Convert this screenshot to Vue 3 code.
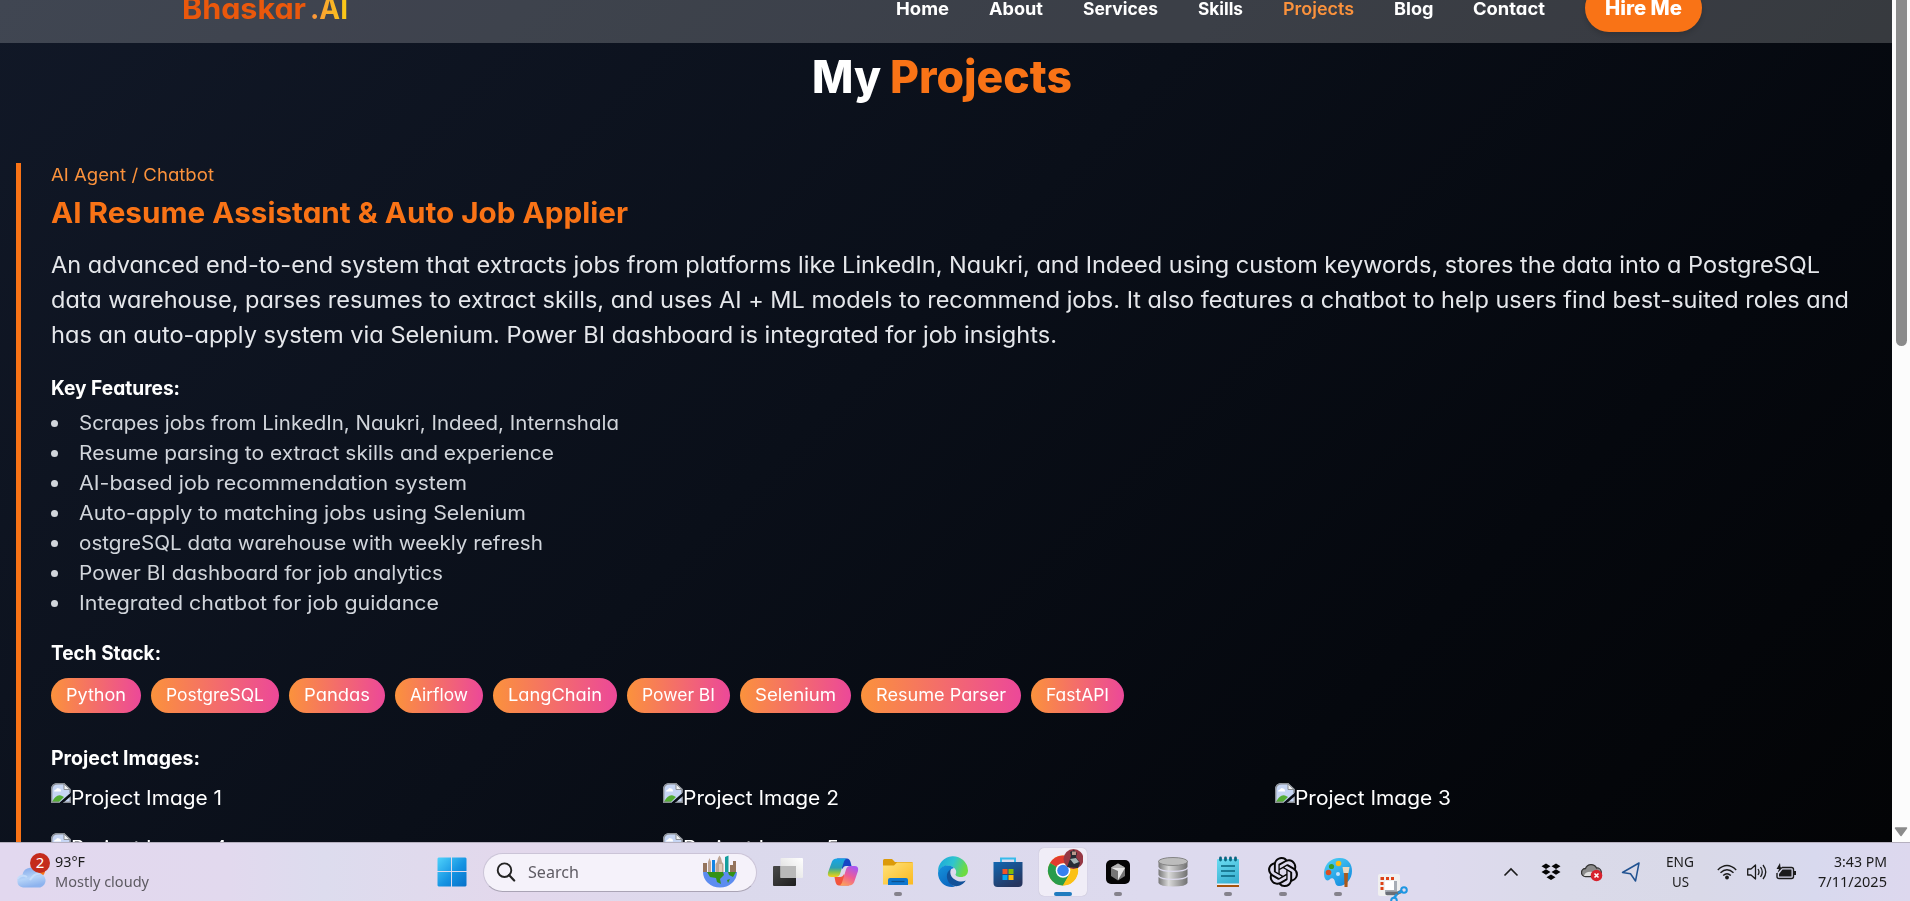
<script setup>
// Stretches a text run horizontally so that it takes the given width.
const vFit = {
  mounted(el, { value }) {
    const natural = el.getBoundingClientRect().width
    el.style.transform = `scaleX(${value / natural})`
    el.style.marginRight = `${value - natural}px`
  }
}

const links = [
  { label: 'Home', w: 53 },
  { label: 'About', w: 54 },
  { label: 'Services', w: 75 },
  { label: 'Skills', w: 45 },
  { label: 'Projects', w: 71, active: true },
  { label: 'Blog', w: 39.5 },
  { label: 'Contact', w: 72 }
]

const summary = [
  { text: 'An advanced end-to-end system that extracts jobs from platforms like LinkedIn, Naukri, and Indeed using custom keywords, stores the data into a PostgreSQL', w: 1769 },
  { text: 'data warehouse, parses resumes to extract skills, and uses AI + ML models to recommend jobs. It also features a chatbot to help users find best-suited roles and', w: 1798 },
  { text: 'has an auto-apply system via Selenium. Power BI dashboard is integrated for job insights.', w: 1006 }
]

const features = [
  { text: 'Scrapes jobs from LinkedIn, Naukri, Indeed, Internshala', w: 540 },
  { text: 'Resume parsing to extract skills and experience', w: 475 },
  { text: 'AI-based job recommendation system', w: 388 },
  { text: 'Auto-apply to matching jobs using Selenium', w: 447 },
  { text: 'ostgreSQL data warehouse with weekly refresh', w: 464 },
  { text: 'Power BI dashboard for job analytics', w: 364 },
  { text: 'Integrated chatbot for job guidance', w: 360 }
]

const stack = [
  { text: 'Python', w: 60 },
  { text: 'PostgreSQL', w: 98 },
  { text: 'Pandas', w: 66 },
  { text: 'Airflow', w: 58 },
  { text: 'LangChain', w: 94 },
  { text: 'Power BI', w: 73 },
  { text: 'Selenium', w: 81 },
  { text: 'Resume Parser', w: 130 },
  { text: 'FastAPI', w: 63 }
]

const images = [
  { text: 'Project Image 1', w: 151 },
  { text: 'Project Image 2', w: 156 },
  { text: 'Project Image 3', w: 156 },
  { text: 'Project Image 4', w: 156 },
  { text: 'Project Image 5', w: 156 }
]
</script>

<template>
  <div class="screen">
    <div class="window">
      <div class="page">
        <header class="header">
          <div class="bar">
            <div class="logo"><span v-fit="124">Bhaskar</span><span v-fit="38" class="ai">.AI</span></div>
            <nav class="nav">
              <a v-for="l in links" :key="l.label" v-fit="l.w" :class="{ active: l.active }">{{ l.label }}</a>
            </nav>
            <div class="hire"><span v-fit="77">Hire Me</span></div>
          </div>
        </header>

        <h1 class="title"><span v-fit="69">My</span><span v-fit="182" class="accent">Projects</span></h1>

        <article class="project">
          <div class="category"><span v-fit="163">AI Agent / Chatbot</span></div>
          <h2><span v-fit="577">AI Resume Assistant &amp; Auto Job Applier</span></h2>
          <p class="summary">
            <span v-for="s in summary" :key="s.w" v-fit="s.w">{{ s.text }}</span>
          </p>
          <h3 class="key"><span v-fit="129">Key Features:</span></h3>
          <ul>
            <li v-for="f in features" :key="f.text"><i></i><span v-fit="f.w">{{ f.text }}</span></li>
          </ul>
          <h3 class="tech"><span v-fit="110">Tech Stack:</span></h3>
          <div class="pills">
            <div v-for="s in stack" :key="s.text" class="pill"><span v-fit="s.w">{{ s.text }}</span></div>
          </div>
          <h3 class="shots"><span v-fit="149">Project Images:</span></h3>
          <div class="gallery">
            <div v-for="i in images" :key="i.text" class="shot">
              <svg width="20" height="20" viewBox="0 0 20 20">
                <path d="M7 0H13L19.500 6V20H0V7Q0 0 7 0Z" fill="#c7d6f4" />
                <path d="M0.700 20V7Q0.700 0.800 7 0.800H13L19 6.500V10" fill="none" stroke="#8b8f94" stroke-width="1.400" />
                <path d="M13 1V6.500H19Z" fill="#f3f4f6" stroke="#8b8f94" />
                <path d="M3 8.500Q3 6.500 5 6.500Q6 4 8 5.500Q10 5.500 10 8.500Z" fill="#fff" />
                <path d="M1 19Q5 11 10 12.500L13 14L8 19Z" fill="#54ad35" />
                <path d="M0 19.300H8M13 19.300H19.300V14" fill="none" stroke="#8b8f94" stroke-width="1.400" />
                <path d="M8 20L20 9.500V13L12 20Z" fill="#0a0e16" />
              </svg>
              <span v-fit="i.w">{{ i.text }}</span>
            </div>
          </div>
        </article>
      </div>

      <div class="scrollbar">
        <div class="thumb"></div>
        <svg width="14" height="10" viewBox="0 0 14 10"><path d="M1.500 1H12.500L7 8.500Z" fill="#8b8b8b" stroke="#8b8b8b" stroke-width="1.500" stroke-linejoin="round" /></svg>
      </div>
    </div>

    <footer class="taskbar">
      <div class="weather">
        <svg width="34" height="38" viewBox="0 0 34 38">
          <defs>
            <linearGradient id="cloud" x1="0" y1="0" x2="0.300" y2="1"><stop offset="0" stop-color="#7fa5e8" /><stop offset="0.600" stop-color="#b5d3f8" /><stop offset="1" stop-color="#8db3ee" /></linearGradient>
          </defs>
          <circle cx="23" cy="18" r="6" fill="#f97316" />
          <path d="M7 34.500a6.500 6.500 0 0 1-0.500-12.800a8.500 8.500 0 0 1 16.300-1.500a7.300 7.300 0 0 1 1.500 14.300Z" fill="url(#cloud)" />
          <path d="M1.500 26q4-5.500 9.500-2M14 27q4-7 10.500-6.500" fill="none" stroke="#c9e0fb" stroke-width="2" opacity="0.800" />
          <circle cx="24" cy="10" r="10" fill="#c42b1c" />
          <text x="24" y="15.300" text-anchor="middle" font-size="15" fill="#fff">2</text>
        </svg>
        <div class="lines">
          <span v-fit="30">93°F</span>
          <span v-fit="94" class="dim">Mostly cloudy</span>
        </div>
      </div>

      <div class="app">
        <svg width="30" height="30" viewBox="0 0 30 30">
          <defs><linearGradient id="win" x1="0" y1="0" x2="1" y2="1"><stop offset="0" stop-color="#4fd2fb" /><stop offset="0.550" stop-color="#1593e2" /><stop offset="1" stop-color="#0670c9" /></linearGradient></defs>
          <path d="M1.500 0.500H14V14H0.500V1.500ZM15 0.500H28.500L29.500 1.500V14H15ZM0.500 15H14V29.500H1.500L0.500 28.500ZM15 15H29.500V28.500L28.500 29.500H15Z" fill="url(#win)" />
        </svg>
      </div>

      <div class="search">
        <svg width="20" height="20" viewBox="0 0 20 20"><circle cx="8.500" cy="8.200" r="6.800" fill="none" stroke="#242424" stroke-width="1.900" /><path d="M13 13L18.200 18.500" stroke="#242424" stroke-width="2.200" stroke-linecap="round" /></svg>
        <span v-fit="51">Search</span>
        <svg class="globe" width="36" height="34" viewBox="0 0 36 34">
          <path d="M1 17H35A17 15.500 0 0 1 1 17Z" fill="#5c8cf0" />
          <path d="M5 17H21L22 20L18 24L19 29L15 27L14 23L8 22ZM26 17H34L31 22L27 20ZM25 25l3-1-2 4Z" fill="#349216" />
          <path d="M1 17V8H5V17ZM28 17V10H31V6H34V17Z" fill="#94745d" />
          <path d="M6 17V7L7.500 3L9 7V17ZM13.500 17V9L15 7L16 3L17.500 0.500L19 3L20 7L21.500 9V17Z" fill="#bda594" />
          <path d="M10 17V5H13V17Z" fill="#1485e4" />
          <path d="M17 17V9H20V17Z" fill="#dfc9b8" />
          <path d="M23 17V2L26.500 0.500V17Z" fill="#149d9d" />
        </svg>
      </div>

      <div class="apps">
        <div class="app">
          <svg width="32" height="30" viewBox="0 0 32 30">
            <defs>
              <linearGradient id="tv1" x1="1" y1="0" x2="0" y2="1"><stop offset="0" stop-color="#fff" /><stop offset="1" stop-color="#d9d9d9" /></linearGradient>
              <linearGradient id="tv2" x1="0" y1="0" x2="1" y2="1"><stop offset="0" stop-color="#494949" /><stop offset="1" stop-color="#1e1e1e" /></linearGradient>
            </defs>
            <rect x="1" y="9" width="23" height="20" rx="1" fill="url(#tv2)" />
            <rect x="8.500" y="1" width="22.500" height="20" rx="1" fill="url(#tv1)" />
            <rect x="8.500" y="9" width="15.500" height="12" fill="#b9b9b9" />
          </svg>
        </div>
        <div class="app">
          <svg width="32" height="30" viewBox="0 0 32 30">
            <defs>
              <linearGradient id="cp1" x1="0" y1="0" x2="0" y2="1"><stop offset="0" stop-color="#16a5e8" /><stop offset="0.500" stop-color="#2b9fb4" /><stop offset="0.750" stop-color="#8bc34a" /><stop offset="1" stop-color="#f6d117" /></linearGradient>
              <linearGradient id="cp2" x1="0.700" y1="0" x2="0.200" y2="1"><stop offset="0" stop-color="#a957f0" /><stop offset="0.500" stop-color="#ef5d94" /><stop offset="1" stop-color="#fba457" /></linearGradient>
            </defs>
            <path d="M10 1.500H20Q22.500 1.500 23.500 5L24.500 9H19Q16.500 9 15.500 12Z" fill="#1746c4" />
            <path d="M22 28.500H12Q9.500 28.500 8.500 25L7.500 20H13Q16 20 17 17Z" fill="#f2543c" />
            <path d="M10 1.500H20Q17.500 2 16.500 6L13 17Q12 20 9 20H4.500Q0 20 1 15.500L5 4.500Q6.300 1.500 10 1.500Z" fill="url(#cp1)" />
            <path d="M22 28.500H12Q14.500 28 15.500 24L19 12.500Q20 9 23 9H27.500Q32 9 31 14L27 25.500Q25.500 28.500 22 28.500Z" fill="url(#cp2)" />
          </svg>
        </div>
        <div class="app">
          <svg width="32" height="30" viewBox="0 0 32 30">
            <defs><linearGradient id="fold" x1="0" y1="0" x2="1" y2="1"><stop offset="0" stop-color="#ffe27a" /><stop offset="1" stop-color="#fbb91f" /></linearGradient></defs>
            <path d="M1 9V3.500Q1 2 2.500 2H10L13 5H29.500Q31 5 31 6.500V9Z" fill="#dc9a08" />
            <path d="M1 8.500H12L15 5.500H31V27.500H1Z" fill="url(#fold)" />
            <path d="M6 28V23Q6 21 8 21H24Q26 21 26 23V28Z" fill="#0f76ce" />
            <path d="M9.500 24.500H22.500" stroke="#0b5290" stroke-width="1.300" />
          </svg>
          <b></b>
        </div>
        <div class="app">
          <svg width="32" height="32" viewBox="0 0 32 32">
            <defs>
              <linearGradient id="ed1" x1="0" y1="0" x2="1" y2="0.300"><stop offset="0" stop-color="#19a4dc" /><stop offset="0.550" stop-color="#2fc4cf" /><stop offset="1" stop-color="#6ddb42" /></linearGradient>
              <linearGradient id="ed2" x1="0" y1="0" x2="0.600" y2="1"><stop offset="0" stop-color="#1593dc" /><stop offset="1" stop-color="#0b66c0" /></linearGradient>
            </defs>
            <path d="M1 16A15 15 0 0 1 31 14.500C31 19 27.500 21 24 21C20 21 18.500 19.500 18.500 18.500C19.500 17 19.500 14.500 18 12.800C14 8 4 9 1 16Z" fill="url(#ed1)" />
            <path d="M1 17C2 9.500 12 7.500 17 12C12 13 9.500 19 11.500 24C13 28 17 30.700 19 30.600C9 33 1 26 1 17Z" fill="url(#ed2)" />
            <path d="M14 13C8 16 9 25 14 28.500C19 32 26 29.500 28.700 24.500C24 27 17 24.500 14.500 20.500C13 18 13 15 14 13Z" fill="#125199" />
          </svg>
        </div>
        <div class="app">
          <svg width="32" height="32" viewBox="0 0 32 32">
            <defs><linearGradient id="store" x1="0" y1="0" x2="0.600" y2="1"><stop offset="0" stop-color="#1267b2" /><stop offset="1" stop-color="#26365f" /></linearGradient></defs>
            <path d="M9 7V2.500H23V7" fill="none" stroke="#37bbeb" stroke-width="2" />
            <path d="M1.500 6H30.500V27Q30.500 31 26.500 31H5.500Q1.500 31 1.500 27Z" fill="url(#store)" />
            <path d="M10.500 13H15.500V18H10.500Z" fill="#f35325" /><path d="M16.500 13H21.500V18H16.500Z" fill="#81bc06" />
            <path d="M10.500 19H15.500V24H10.500Z" fill="#05a6f0" /><path d="M16.500 19H21.500V24H16.500Z" fill="#ffba08" />
          </svg>
        </div>
        <div class="app current">
          <svg width="38" height="42" viewBox="0 0 38 42">
            <circle cx="18" cy="22.500" r="15" fill="#fbc116" />
            <path d="M18 22.500L5 15A15 15 0 0 1 31 15Z" fill="#e33b2e" />
            <path d="M18 22.500L5 15A15 15 0 0 0 18 37.500L24.500 26.200Z" fill="#289c4b" />
            <path d="M18 15H31A15 15 0 0 1 18 37.500L24.500 26Z" fill="#fbc116" />
            <circle cx="18" cy="22.500" r="7.300" fill="#fff" /><circle cx="18" cy="22.500" r="5.800" fill="#3580f0" />
            <circle cx="28.500" cy="11" r="10" fill="#963844" />
            <path d="M24 14L26 8L25 4L29 2L32 5L31 9L35 15L33 20L22 19Z" fill="#262c34" />
            <path d="M25 11L31 10L34 14L29 16Z" fill="#a6b5b5" /><path d="M27 3.500H31V7H27Z" fill="#b8988c" />
          </svg>
          <b></b>
        </div>
        <div class="app">
          <svg width="26" height="26" viewBox="0 0 26 26">
            <rect x="1" y="1" width="24" height="24" rx="5" fill="#050505" />
            <path d="M13 4.500L20 8.500V17L13 21.500L6 17V8.500Z" fill="#757575" /><path d="M6 8.500L13 4.500L20 8.500L13 11Z" fill="#b5b5b5" /><path d="M6.500 9H20L13 21V12Z" fill="#e5e5e5" />
          </svg>
          <b></b>
        </div>
        <div class="app">
          <svg width="32" height="32" viewBox="0 0 32 32">
            <defs><linearGradient id="db"><stop offset="0" stop-color="#777" /><stop offset="0.350" stop-color="#dadada" /><stop offset="1" stop-color="#707070" /></linearGradient></defs>
            <path d="M1.500 21V27Q3 30.500 16 30.500T30.500 27V21Q28 24 16 24T1.500 21Z" fill="url(#db)" />
            <path d="M1.500 13V19Q3 22.800 16 22.800T30.500 19V13Q28 16 16 16T1.500 13Z" fill="url(#db)" />
            <path d="M1.500 5V11Q3 14.800 16 14.800T30.500 11V5Z" fill="url(#db)" />
            <ellipse cx="16" cy="5.500" rx="14.500" ry="4" fill="#bcbcbc" stroke="#858585" />
          </svg>
        </div>
        <div class="app">
          <svg width="26" height="32" viewBox="0 0 26 32">
            <defs><linearGradient id="note" x1="0" y1="0" x2="0.400" y2="1"><stop offset="0" stop-color="#6bdcf2" /><stop offset="1" stop-color="#3bb1d1" /></linearGradient></defs>
            <rect x="2" y="3" width="22" height="26" rx="1" fill="url(#note)" />
            <path d="M2 27.500H24V29H2Z" fill="#eee" /><path d="M2 29H24V31H2Z" fill="#a6530b" />
            <path d="M6 10H20M6 15H20M6 20H20" stroke="#08647d" stroke-width="1.600" />
            <path d="M5.500 2V4M10.500 2V4M15.500 2V4M20.500 2V4" stroke="#0b6681" stroke-width="2.800" stroke-linecap="round" />
          </svg>
          <b></b>
        </div>
        <div class="app">
          <svg width="30" height="30" viewBox="0 0 24 24">
            <path fill="#080808" d="M22.282 9.821a5.985 5.985 0 0 0-.516-4.910 6.046 6.046 0 0 0-6.510-2.900A6.065 6.065 0 0 0 4.981 4.182a5.985 5.985 0 0 0-3.998 2.900 6.046 6.046 0 0 0 .743 7.097 5.980 5.980 0 0 0 .510 4.911 6.051 6.051 0 0 0 6.515 2.900A5.985 5.985 0 0 0 13.260 24a6.056 6.056 0 0 0 5.772-4.206 5.990 5.990 0 0 0 3.998-2.900 6.056 6.056 0 0 0-.748-7.073zM13.260 22.430a4.476 4.476 0 0 1-2.876-1.040l.141-.081 4.779-2.758a.795.795 0 0 0 .393-.681v-6.737l2.020 1.169a.071.071 0 0 1 .038.052v5.583a4.504 4.504 0 0 1-4.495 4.494zM3.600 18.304a4.471 4.471 0 0 1-.535-3.014l.142.085 4.783 2.759a.771.771 0 0 0 .780 0l5.843-3.369v2.332a.080.080 0 0 1-.033.062L9.740 19.950a4.499 4.499 0 0 1-6.140-1.646zM2.340 7.896a4.485 4.485 0 0 1 2.366-1.973V11.600a.766.766 0 0 0 .388.676l5.815 3.355-2.020 1.169a.076.076 0 0 1-.071 0l-4.830-2.787A4.504 4.504 0 0 1 2.340 7.872zm16.597 3.855l-5.833-3.387L15.119 7.200a.076.076 0 0 1 .071 0l4.830 2.791a4.494 4.494 0 0 1-.676 8.105v-5.678a.790.790 0 0 0-.407-.667zm2.010-3.023l-.141-.085-4.774-2.782a.776.776 0 0 0-.785 0L9.409 9.230V6.897a.066.066 0 0 1 .028-.061l4.830-2.787a4.499 4.499 0 0 1 6.680 4.660zm-12.640 4.135l-2.020-1.164a.080.080 0 0 1-.038-.057V6.075a4.499 4.499 0 0 1 7.375-3.453l-.142.080L8.704 5.460a.795.795 0 0 0-.393.681zm1.097-2.365l2.602-1.500 2.607 1.500v2.999l-2.597 1.500-2.607-1.500z" />
          </svg>
          <b></b>
        </div>
        <div class="app">
          <svg width="32" height="32" viewBox="0 0 32 32">
            <defs><linearGradient id="pal" x1="0" y1="0" x2="0.700" y2="1"><stop offset="0" stop-color="#50d4f6" /><stop offset="1" stop-color="#158ce0" /></linearGradient></defs>
            <path d="M2 16C3 7 10 1.500 18 2C26 2 30 8 30 15C30 23 24 30 17 30C12 30 14 24 11 22.500C8 21 7 26 4 24C2 22 2 19 2 16Z" fill="url(#pal)" />
            <circle cx="16.500" cy="7.500" r="2.800" fill="#fbb915" /><circle cx="9.500" cy="10.500" r="2.600" fill="#3a9e28" /><circle cx="6.500" cy="16.500" r="2.800" fill="#d84f22" /><circle cx="16" cy="18" r="2" fill="#c5e2fb" />
            <path d="M22 16H26L25.500 31H22.500Z" fill="#a9591c" /><path d="M20.500 11H27.500L26.500 17H21.500Z" fill="#ead6bc" />
          </svg>
          <b></b>
        </div>
        <div class="app snip">
          <svg width="32" height="28" viewBox="0 0 32 28">
            <rect x="1" y="1" width="22" height="22" rx="2" fill="#f0f0f0" />
            <path d="M5 4V18M4 5.500H18" stroke="#dd4215" stroke-width="3" stroke-dasharray="3 2" fill="none" />
            <path d="M8 8H17V17H8Z" fill="#fff" /><path d="M17 8H20V20H8V17H17Z" fill="#a8adb5" />
            <path d="M10 20.500H20L24 18.500" stroke="#6a6e76" stroke-width="3.500" stroke-linecap="round" />
            <circle cx="27" cy="17" r="2.800" fill="none" stroke="#1e96e2" stroke-width="2" /><path d="M21 20L25 18M20 21L17 25" stroke="#1e96e2" stroke-width="2.500" />
            <circle cx="17" cy="27.500" r="2.800" fill="none" stroke="#1e96e2" stroke-width="2" />
          </svg>
        </div>
      </div>

      <div class="tray">
        <svg class="chev" width="16" height="10" viewBox="0 0 16 10"><path d="M1.500 8.500L8 2L14.500 8.500" fill="none" stroke="#1b1b1b" stroke-width="1.600" /></svg>
        <svg class="box" width="20" height="18" viewBox="0 0 20 18"><path d="M5 0.500L9.500 3.200L5 5.900L0.500 3.200ZM15 0.500L19.500 3.200L15 5.900L10.500 3.200ZM5 6.300L9.500 9L5 11.700L0.500 9ZM15 6.300L19.500 9L15 11.700L10.500 9ZM10 11.500L14.500 14.200L10 16.900L5.500 14.200Z" fill="#050505" /></svg>
        <svg class="od" width="22" height="20" viewBox="0 0 22 20"><path d="M4.500 14.500a4 4 0 0 1 0-8a6 6 0 0 1 11-0.500a4 4 0 0 1 1 8.500Z" fill="#8b8b8b" stroke="#333" stroke-width="1.300" /><path d="M3 14Q4 9 12 10L11 14Z" fill="#dedede" /><circle cx="15.500" cy="13.500" r="5.800" fill="#d7232e" /><path d="M13.500 11.500L17.500 15.500M17.500 11.500L13.500 15.500" stroke="#fff" stroke-width="1.600" /></svg>
        <svg class="loc" width="20" height="22" viewBox="0 0 20 22"><path d="M18 2L1.500 11.500L9.500 12.800L14.500 20Z" fill="none" stroke="#205291" stroke-width="1.500" stroke-linejoin="round" /></svg>
        <div class="lines center"><span v-fit="28">ENG</span><span v-fit="17">US</span></div>
        <svg class="wifi" width="20" height="16" viewBox="0 0 20 16"><path d="M0.800 6Q10-2.800 19.200 6M3.500 8.800Q10 2.500 16.500 8.800M6.200 11.500Q10 8 13.800 11.500" fill="none" stroke="#1b1b1b" stroke-width="1.400" /><circle cx="10" cy="13.500" r="1.900" fill="#1b1b1b" /></svg>
        <svg class="vol" width="20" height="18" viewBox="0 0 20 18"><path d="M0.700 6H4L8.500 2V16L4 12H0.700Z" fill="none" stroke="#1b1b1b" stroke-width="1.300" stroke-linejoin="round" /><path d="M11 6Q13 9 11 12M13.500 4Q17 9 13.500 14M16 2Q21.500 9 16 16" fill="none" stroke="#1b1b1b" stroke-width="1.300" /></svg>
        <svg class="bat" width="21" height="18" viewBox="0 0 21 18"><path d="M6 4.500H15.500Q17.500 4.500 17.500 6.500V13.500Q17.500 15.500 15.500 15.500H3Q1 15.500 1 13.500V10" fill="none" stroke="#1b1b1b" stroke-width="1.400" /><path d="M6.500 6.500H15.500V13.500H3V11Z" fill="#1b1b1b" /><path d="M4 0L0.500 6H3L1.500 10L7 4.200H4.500Z" fill="#1b1b1b" /><path d="M18 8H20V12H18Z" fill="#1b1b1b" /></svg>
        <div class="lines clock"><span v-fit="53">3:43 PM</span><span v-fit="69">7/11/2025</span></div>
      </div>
    </footer>
  </div>
</template>

<style>
body {
  margin: 0;
}
</style>

<style scoped>
.screen {
  width: 1910px;
  height: 901px;
  overflow: hidden;
  display: flex;
  flex-direction: column;
  font-family: Inter, sans-serif;
  font-variant-ligatures: none;
  font-feature-settings: "cv11";
  color: #fff;
}
span,
a {
  display: inline-block;
  transform-origin: 0 50%;
  white-space: nowrap;
}
h1,
h2,
h3,
p,
ul {
  margin: 0;
  padding: 0;
}
svg {
  display: block;
  flex: none;
}
.window {
  display: flex;
  height: 842px;
  overflow: hidden;
}
.page {
  width: 1892px;
  height: 842px;
  overflow: hidden;
  background: linear-gradient(135deg, #111827 0%, #0a0f19 45%, #05080e 75%, #030406 100%);
}
.header {
  height: 43px;
  overflow: hidden;
  background: rgba(255, 255, 255, 0.2);
}
.bar {
  display: flex;
  align-items: center;
  height: 70px;
  margin-top: -27px;
  padding: 0 190px 0 181.500px;
}
.logo {
  display: flex;
  gap: 4px;
  font-size: 29.5px;
  font-weight: 700;
  color: #ea580c;
}
.ai {
  background: linear-gradient(90deg, #fb923c, #facc15);
  background-clip: text;
  color: transparent;
}
.nav {
  display: flex;
  gap: 40px;
  margin-left: auto;
  padding-top: 1px;
  font-size: 17.500px;
  font-weight: 700;
  line-height: 24px;
}
.active {
  color: #fb923c;
  font-weight: 600;
}
.hire {
  height: 48px;
  line-height: 48px;
  margin-left: 40px;
  padding: 0 20px;
  border-radius: 24px;
  background: #f97316;
  box-shadow: 0 3px 5px rgba(0, 0, 0, 0.15);
  font-size: 19.500px;
  font-weight: 800;
}
.title {
  display: flex;
  justify-content: center;
  gap: 9px;
  height: 59px;
  margin-top: 4px;
  padding-right: 8px;
  font-size: 45.500px;
  font-weight: 800;
  line-height: 60px;
}
.accent {
  color: #f97316;
}
.project {
  box-sizing: border-box;
  height: 760px;
  margin: 57px 0 0 16px;
  padding-left: 30px;
  border-left: 5px solid #f97316;
}
.category {
  height: 24px;
  font-size: 17.500px;
  line-height: 24px;
  color: #fb923c;
}
h2 {
  margin-top: 5px;
  height: 40px;
  font-size: 29px;
  font-weight: 700;
  line-height: 42px;
  color: #f97316;
}
.summary {
  display: flex;
  flex-direction: column;
  align-items: flex-start;
  margin-top: 15px;
  font-size: 22.200px;
  line-height: 35px;
  color: #e5e7eb;
}
h3 {
  height: 30px;
  font-size: 19.500px;
  font-weight: 700;
  line-height: 30px;
}
.key {
  margin-top: 21px;
}
.tech {
  margin-top: 20px;
}
.shots {
  margin-top: 30px;
}
ul {
  margin-top: 5px;
  font-size: 19.500px;
  line-height: 30px;
  color: #d1d5db;
  list-style: none;
}
li {
  display: flex;
  align-items: center;
  height: 30px;
}
li i {
  width: 7px;
  height: 7px;
  margin-right: 21px;
  border-radius: 50%;
  background: #d1d5db;
}
.pills {
  display: flex;
  gap: 10px;
  margin-top: 10px;
}
.pill {
  height: 35px;
  padding: 0 15px;
  border-radius: 18px;
  background: linear-gradient(90deg, #fb923c, #ec4899);
  font-size: 17.300px;
  line-height: 34px;
}
.gallery {
  display: grid;
  grid-template-columns: repeat(3, 612px);
  row-gap: 20px;
  margin-top: 10px;
}
.shot {
  display: flex;
  height: 30px;
  font-size: 19.500px;
  line-height: 30px;
}
.scrollbar {
  display: flex;
  flex-direction: column;
  align-items: center;
  justify-content: space-between;
  width: 18px;
  height: 837px;
  padding-bottom: 5px;
  background: #fcfcfc;
}
.thumb {
  width: 11px;
  height: 346px;
  border-radius: 0 0 6px 6px;
  background: #8b8b8b;
}
.taskbar {
  box-sizing: border-box;
  display: flex;
  align-items: center;
  height: 59px;
  border-top: 1px solid #b5b0bf;
  background: linear-gradient(90deg, #e2d8ef 0%, #e2d9ee 12%, #dddcee 17%, #e3d8ec 27%, #dbd9ec 38%, #dddaee 60%, #dedaee 75%, #dadae9 82%, #d9d9e8 89%, #d8d9ee 95%, #ddd8ee 100%);
  font-family: "Noto Sans", sans-serif;
  color: #1b1b1b;
}
.weather {
  display: flex;
  flex: none;
  box-sizing: border-box;
  gap: 5px;
  width: 424px;
  padding-left: 16px;
}
.lines {
  display: flex;
  flex-direction: column;
  align-items: flex-start;
  margin-top: -2px;
  font-size: 15px;
  line-height: 20px;
}
.dim {
  color: #5d5a62;
}
.app {
  position: relative;
  display: flex;
  align-items: center;
  justify-content: center;
  flex: none;
  width: 55px;
  height: 48px;
}
.app b {
  position: absolute;
  bottom: 0;
  left: 23.500px;
  width: 8px;
  height: 4px;
  border-radius: 2px;
  background: #85828c;
}
.current {
  width: 48px;
  margin: 0 3.500px;
  border-radius: 5px;
  background: #f0edf7;
  box-shadow: 0 0 1px #aaa5b5;
}
.current svg {
  margin: -6px 0 0 2px;
}
.current b {
  left: 15px;
  width: 18px;
  background: #207bbf;
}
.snip {
  align-items: flex-end;
  height: 58px;
}
.search {
  box-sizing: border-box;
  display: flex;
  flex: none;
  align-items: center;
  width: 274px;
  height: 39px;
  margin-left: 4px;
  padding: 0 18px 0 12px;
  border: 1px solid #cbc4d7;
  border-bottom-color: #aaa4b5;
  border-radius: 20px;
  background: #f5f2fa;
  font-size: 17px;
  line-height: 24px;
  color: #5e5b63;
}
.search span {
  margin-left: 12px;
}
.globe {
  margin-left: auto;
}
.apps {
  display: flex;
  align-items: center;
  margin-left: 3.500px;
}
.tray {
  display: flex;
  align-items: center;
  margin-left: auto;
  padding-right: 23px;
}
.box {
  margin-left: 22px;
}
.od {
  margin-left: 20px;
}
.loc {
  margin-left: 18px;
}
.center {
  align-items: center;
  margin-left: 25px;
}
.wifi {
  margin-left: 23px;
}
.vol {
  margin-left: 10px;
}
.bat {
  margin-left: 9px;
}
.clock {
  align-items: flex-end;
  margin-left: 21px;
}
</style>
